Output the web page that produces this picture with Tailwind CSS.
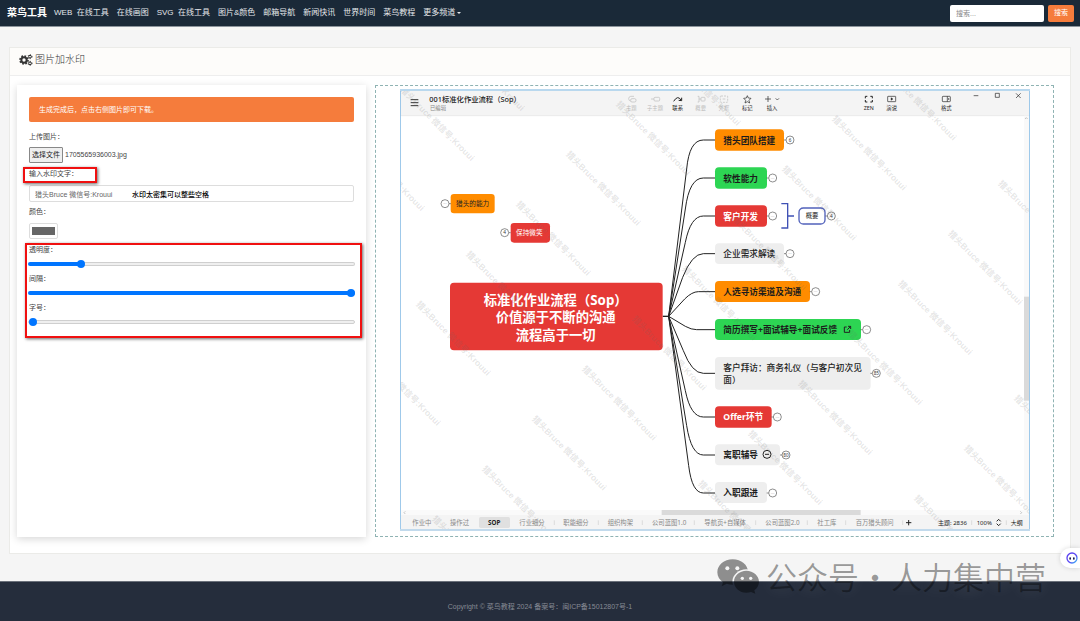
<!DOCTYPE html>
<html lang="zh-CN">
<head>
<meta charset="utf-8">
<meta name="viewport" content="width=device-width, initial-scale=1">
<title>图片加水印 - 菜鸟工具</title>
<script src="https://cdn.jsdelivr.net/npm/@tailwindcss/browser@4"></script>
</head>
<body class="flex min-h-screen flex-col bg-[#f5f5f5] font-['Liberation_Sans','Noto_Sans_CJK_SC',sans-serif] text-[7px] leading-[10px] text-[#444]">

<header class="flex h-[27px] items-center border-b border-[#8c949c] bg-[#1a2938] pr-[6px] pl-[7px] text-[8px] text-[#e4e7ea]">
  <a href="#" class="mr-[7px] text-[10px] font-bold whitespace-nowrap text-white">菜鸟工具</a>
  <nav class="flex flex-1 items-center gap-2 whitespace-nowrap">
    <a href="#">WEB&nbsp; 在线工具</a>
    <a href="#">在线画图</a>
    <a href="#">SVG&nbsp; 在线工具</a>
    <a href="#">图片&amp;颜色</a>
    <a href="#">邮箱导航</a>
    <a href="#">新闻快讯</a>
    <a href="#">世界时间</a>
    <a href="#">菜鸟教程</a>
    <a href="#" class="flex items-center gap-[2px]">更多频道<span class="border-x-2 border-t-2 border-x-transparent border-t-[#e4e7ea]"></span></a>
  </nav>
  <form class="flex gap-1 text-[7px]">
    <input type="search" aria-label="搜索" placeholder="搜索..." class="h-[17px] w-[94px] rounded-[2px] bg-white px-[6px] text-[#444] placeholder:text-[#888]">
    <button type="button" class="h-[17px] w-[26px] rounded-[2px] bg-[#f57c3c] text-white">搜索</button>
  </form>
</header>

<main class="mx-[9px] mt-5 mb-[27px] border border-[#ebebe8] bg-white">
  <h1 class="flex h-[28px] items-center gap-[2px] border-b border-[#eee] bg-[#fdfcfa] pb-1 pl-[9px] text-[10px] font-light text-[#333]">
    <svg class="size-[14px]" viewBox="0 0 42 42" fill="none" stroke="#333">
      <circle cx="15" cy="21" r="8" stroke-width="6"/>
      <circle cx="15" cy="21" r="12" stroke-width="5" stroke-dasharray="5 4.42"/>
      <circle cx="33" cy="11" r="4" stroke-width="3"/>
      <circle cx="33" cy="11" r="6" stroke-width="3" stroke-dasharray="3 3.28"/>
      <circle cx="33" cy="31" r="4" stroke-width="3"/>
      <circle cx="33" cy="31" r="6" stroke-width="3" stroke-dasharray="3 3.28"/>
    </svg>
    图片加水印
  </h1>

  <div class="grid grid-cols-[35fr_68fr] gap-[9px] pt-[9px] pr-4 pb-4 pl-[7px]">
    <form class="relative flex flex-col bg-white p-3 shadow-[0_2px_8px_rgba(0,0,0,0.16)]">
      <p class="flex h-[25px] items-center rounded-[2px] bg-[#f57c3c] px-[10px] text-white">生成完成后，点击右侧图片即可下载。</p>

      <label for="file" class="mt-[10px]">上传图片：</label>
      <div class="mt-[5px] flex h-4 items-center gap-px">
        <label for="file" class="flex h-4 items-center rounded-[1px] border border-[#888] bg-[#efefef] px-[2px] text-[#222]">选择文件</label>
        <input id="file" type="file" class="sr-only">
        <span class="pl-px">1705565936003.jpg</span>
      </div>

      <label for="mark" class="mt-[6px]">输入水印文字：</label>
      <input id="mark" type="text" value="猎头Bruce 微信号:Krouui" class="mt-[6px] h-[17px] rounded-[2px] border border-[#ddd] px-[5px] text-[#666]">

      <label for="color" class="mt-[5px]">颜色：</label>
      <input id="color" type="color" value="#666666" class="mt-[6px] h-4 w-[29px] rounded-[2px] border border-[#ddd] p-[2px] [&::-webkit-color-swatch]:rounded-none [&::-webkit-color-swatch]:border-0 [&::-webkit-color-swatch-wrapper]:px-0 [&::-webkit-color-swatch-wrapper]:py-[1px]">

      <label for="alpha" class="mt-[6px]">透明度：</label>
      <input id="alpha" type="range" min="0" max="100" value="15" class="-mx-px my-[7px] h-1 appearance-none rounded-full border border-transparent [&::-webkit-slider-thumb]:size-2 [&::-webkit-slider-thumb]:appearance-none [&::-webkit-slider-thumb]:rounded-full [&::-webkit-slider-thumb]:bg-[#0075ff]" style="background:linear-gradient(#0075ff,#0075ff) 0 0/16% 100% no-repeat border-box,linear-gradient(#efefef,#efefef) padding-box,linear-gradient(#cfcfcf,#cfcfcf) border-box">

      <label for="gap" class="mt-[1px]">间隔：</label>
      <input id="gap" type="range" min="0" max="100" value="100" class="-mx-px my-[7px] h-1 appearance-none rounded-full bg-[#0075ff] [&::-webkit-slider-thumb]:size-2 [&::-webkit-slider-thumb]:appearance-none [&::-webkit-slider-thumb]:rounded-full [&::-webkit-slider-thumb]:bg-[#0075ff]">

      <label for="size" class="mt-[1px]">字号：</label>
      <input id="size" type="range" min="0" max="100" value="0" class="-mx-px my-[7px] h-1 appearance-none rounded-full border border-[#cfcfcf] bg-[#efefef] [&::-webkit-slider-thumb]:size-2 [&::-webkit-slider-thumb]:appearance-none [&::-webkit-slider-thumb]:rounded-full [&::-webkit-slider-thumb]:bg-[#0075ff]">

      <span class="absolute top-[105px] left-[115px] font-medium text-black">水印太密集可以整些空格</span>
      <span class="absolute top-[82px] left-[6px] h-4 w-[74px] border-2 border-[#f01010] shadow-[1px_1px_3px_rgba(0,0,0,0.6)]"></span>
      <span class="absolute top-[158px] right-[4px] left-[8px] h-[95px] border-2 border-[#f01010] shadow-[1px_1px_3px_rgba(0,0,0,0.6)]"></span>
    </form>

    <div class="border border-dashed border-[#8fb3b3] px-4 pt-[3px] pb-[5px]">
      <svg id="map" class="mx-auto block h-auto w-full max-w-[630px]" viewBox="0 0 1890 1326" font-family="'Noto Sans','Noto Sans CJK SC',sans-serif">
        <rect width="1890" height="1326" fill="#fff"/>
        <rect width="1890" height="80" fill="#f4f4f4"/>
        <path d="M0 80H1890" stroke="#e4e4e4" stroke-width="2"/>

        <!-- toolbar -->
        <path d="M32 32H55M32 41H55M32 50H55" stroke="#333" stroke-width="3"/>
        <text x="88" y="40" font-size="22" font-weight="500" fill="#222">001标准化作业流程（Sop）</text>
        <text x="90" y="62" font-size="16" fill="#888">已编辑</text>
        <g fill="none" stroke="#bbb" stroke-width="2">
          <rect x="692" y="29" width="16" height="10" rx="4"/><path d="M692 37q-6-2-6-8t6-7h10"/>
          <rect x="762" y="25" width="17" height="11" rx="3"/><path d="M753 30H762"/>
          <path d="M893 22h4v17h-4M897 30h6"/><rect x="903" y="25" width="12" height="11" rx="2"/>
          <rect x="961" y="21" width="22" height="19" rx="2" stroke-dasharray="6 3"/><path d="M968 30h8"/>
        </g>
        <g fill="none" stroke="#222" stroke-width="3">
          <path d="M821 37Q833 17 843 33M836 34l9 1 0-9"/>
          <path d="M1042 20l3 7 8 1-6 6 2 8-7-4-7 4 2-8-6-6 8-1z" stroke-width="2"/>
          <path d="M1095 30h18M1104 21v18M1127 28l5 5 5-5" stroke-width="2"/>
          <path d="M1402 22h-6v6M1411 22h6v6M1402 39h-6v-6M1411 39h6v-6"/>
          <rect x="1463" y="22" width="24" height="16" rx="1" stroke-width="2"/><path d="M1473 26l6 4-6 4z" fill="#222" stroke-width="1"/>
          <rect x="1627" y="22" width="24" height="16" rx="2" stroke-width="2"/><path d="M1642 22v16M1646 27v6" stroke-width="2"/>
          <path d="M1721 20h14M1786 13h12v12h-12zM1848 13l14 14M1862 13l-14 14" stroke-width="2"/>
        </g>
        <g font-size="16" text-anchor="middle" fill="#bbb">
          <text x="694" y="63">主题</text><text x="765" y="63">子主题</text><text x="902" y="63">概要</text><text x="972" y="63">外框</text>
          <g fill="#222"><text x="833" y="63">联系</text><text x="1042" y="63">标记</text><text x="1116" y="63">插入</text><text x="1406" y="63">ZEN</text><text x="1475" y="63">演说</text><text x="1639" y="63">格式</text></g>
        </g>

        <!-- branches -->
        <g fill="none" stroke="#222" stroke-width="3">
          <path d="M788 682H806" stroke-width="4"/>
          <path d="M806 682L860 240Q868 153 910 153H945"/>
          <path d="M806 682L856 360Q868 267 910 267H945"/>
          <path d="M806 682L856 460Q872 381 910 381H945"/>
          <path d="M806 682L848 565Q876 494 910 494H945"/>
          <path d="M806 682L854 630Q876 608 895 608H945"/>
          <path d="M806 682L856 712Q874 722 890 722H945"/>
          <path d="M806 682L850 785Q876 853 910 853H945"/>
          <path d="M806 682L856 905Q872 984 910 984H945"/>
          <path d="M806 682L860 1010Q874 1098 910 1098H945"/>
          <path d="M806 682L866 1130Q876 1212 910 1212H945"/>
        </g>

        <!-- topics -->
        <rect x="150" y="581" width="638" height="203" rx="12" fill="#e53935"/>
        <g font-size="40" font-weight="700" fill="#fff" text-anchor="middle">
          <text x="467" y="647">标准化作业流程（Sop）</text><text x="467" y="700">价值源于不断的沟通</text><text x="467" y="753">流程高于一切</text>
        </g>
        <rect x="152" y="315" width="132" height="58" rx="10" fill="#ff8c00"/><text x="168" y="351" font-size="20" fill="#222">猎头的能力</text>
        <rect x="332" y="402" width="118" height="59" rx="10" fill="#e53935"/><text x="348" y="438" font-size="20" fill="#fff">保持微笑</text>
        <rect x="945" y="121" width="207" height="64" rx="12" fill="#ff8c00"/>
        <rect x="945" y="235" width="156" height="64" rx="12" fill="#2dd553"/>
        <rect x="945" y="349" width="156" height="64" rx="12" fill="#e53935"/>
        <rect x="945" y="463" width="207" height="62" rx="12" fill="#eee"/>
        <rect x="945" y="576" width="285" height="63" rx="12" fill="#ff8c00"/>
        <rect x="945" y="690" width="438" height="63" rx="12" fill="#2dd553"/>
        <rect x="945" y="804" width="467" height="98" rx="12" fill="#eee"/>
        <rect x="945" y="952" width="170" height="64" rx="12" fill="#e53935"/>
        <rect x="945" y="1066" width="195" height="63" rx="12" fill="#eee"/>
        <rect x="945" y="1179" width="156" height="63" rx="12" fill="#eee"/>
        <g font-size="26" font-weight="700" fill="#1c1c1c">
          <text x="970" y="164">猎头团队搭建</text>
          <text x="970" y="278">软性能力</text>
          <text x="970" y="392" fill="#fff">客户开发</text>
          <text x="970" y="505" font-weight="500">企业需求解读</text>
          <text x="970" y="619">人选寻访渠道及沟通</text>
          <text x="970" y="733">简历撰写+面试辅导+面试反馈</text>
          <text x="970" y="847" font-weight="500">客户拜访：商务礼仪（与客户初次见</text>
          <text x="970" y="882" font-weight="500">面）</text>
          <text x="970" y="994" fill="#fff">Offer环节</text>
          <text x="970" y="1108">离职辅导</text>
          <text x="970" y="1222">入职跟进</text>
        </g>
        <path d="M1340 714h-7v16h16v-7M1344 712h8v8M1352 712l-10 10" fill="none" stroke="#222" stroke-width="3"/>
        <circle cx="1101" cy="1096" r="12" fill="none" stroke="#222" stroke-width="3"/><path d="M1095 1096h12" stroke="#222" stroke-width="3"/>
        <path d="M1144 344H1163V417H1144M1163 381H1182" fill="none" stroke="#3f51b5" stroke-width="4"/>
        <rect x="1197" y="357" width="78" height="48" rx="13" fill="#fff" stroke="#5161bb" stroke-width="4"/>
        <text x="1236" y="388" font-size="19" text-anchor="middle" fill="#222">概要</text>
        <g id="toggles" fill="#fff" stroke="#555" stroke-width="2"></g>

        <!-- scroll bars -->
        <rect x="1872" y="80" width="15" height="1183" fill="#f9f9f9"/><rect x="1872" y="623" width="15" height="312" fill="#dadada"/>
        <rect x="3" y="1263" width="1884" height="15" fill="#fafafa"/><rect x="785" y="1263" width="597" height="15" fill="#dadada"/>
        <path d="M16 1267l-4 4 4 4M1861 1267l4 4-4 4M1875 90l4-4 4 4" fill="none" stroke="#aaa" stroke-width="2"/>

        <!-- sheet tabs -->
        <rect x="3" y="1278" width="1884" height="42" fill="#f4f4f4"/>
        <rect x="237" y="1284" width="93" height="33" rx="5" fill="#e0e0e0"/>
        <g font-size="19" fill="#888">
          <text x="37" y="1308">作业中</text><text x="150" y="1308">操作过</text><text x="283" y="1308" text-anchor="middle" font-weight="700" fill="#222">SOP</text>
          <text x="358" y="1308">行业细分</text><text x="490" y="1308">职能细分</text><text x="623" y="1308">组织构架</text><text x="756" y="1308">公司蓝图1.0</text>
          <text x="913" y="1308">导航页+自媒体</text><text x="1096" y="1308">公司蓝图2.0</text><text x="1252" y="1308">社工库</text><text x="1367" y="1308">百万猎头顾问</text>
          <g fill="#222" font-size="18"><text x="1614" y="1308">主题: 2836</text><text x="1730" y="1308">100%</text><text x="1832" y="1308">大纲</text></g>
        </g>
        <path d="M463 1294v14M595 1294v14M727 1294v14M883 1294v14M1067 1294v14M1222 1294v14M1337 1294v14M1508 1294v14M1715 1294v14M1819 1294v14" stroke="#d0d0d0" stroke-width="2"/>
        <path d="M1518 1301h16M1526 1293v16M1790 1297l6-6 6 6M1790 1304l6 6 6-6" fill="none" stroke="#222" stroke-width="3"/>

        <g id="marks" font-family="'Liberation Sans','Noto Sans CJK SC',sans-serif" font-size="26" font-weight="700" fill="#666" fill-opacity="0.17"></g>

        <path d="M1 0V1326M1889 0V1326" stroke="#8cbfe6" stroke-width="3"/>
        <path d="M0 3H1890" stroke="#b9d8ee" stroke-width="6"/>
        <path d="M0 1323H1890" stroke="#c2daec" stroke-width="6"/>
      </svg>
    </div>
  </div>
</main>

<footer class="relative flex-1 border-t border-[#6a707a] bg-[#252d3c] pt-5 pb-[9px] text-center text-[#858a94]">
  <p>Copyright © 菜鸟教程 2024 备案号：闽ICP备15012807号-1</p>
  <div class="absolute -top-6 right-[34px] flex items-center font-['Noto_Sans_CJK_SC',sans-serif] text-[31px] leading-[36px] font-[350] whitespace-nowrap text-black/40 [text-shadow:0_0_16px_rgba(255,255,255,0.14)]">
    <svg class="mr-[6px] h-9 w-11" viewBox="0 0 132 108">
      <defs>
        <mask id="big"><rect width="132" height="108" fill="#fff"/><circle cx="34" cy="31" r="6"/><circle cx="64" cy="31" r="6"/><ellipse cx="91" cy="71" rx="42" ry="37"/></mask>
        <mask id="small"><rect width="132" height="108" fill="#fff"/><circle cx="79" cy="61" r="5"/><circle cx="104" cy="61" r="5"/></mask>
      </defs>
      <path mask="url(#big)" d="M50 4C24 4 4 21 4 43c0 13 7 23 17 30l-4 12 15-8c6 2 12 3 18 3 26 0 46-17 46-38S76 4 50 4z" fill="#000" fill-opacity="0.42"/>
      <path mask="url(#small)" d="M91 38c-21 0-37 15-37 33s16 33 37 33c5 0 10-1 14-2l13 5-3-10c8-6 14-15 14-26 0-18-17-33-38-33z" fill="#000" fill-opacity="0.42"/>
    </svg>
    <span>公众号</span><span class="flex w-8 justify-center">·</span><span>人力集中营</span>
  </div>
</footer>

<button type="button" aria-label="助手" class="absolute top-[548px] right-0 flex h-5 w-5 items-center justify-end rounded-l-full bg-white pr-[2px] shadow-[0_0_5px_rgba(0,0,0,0.15)]">
  <svg class="size-3" viewBox="0 0 36 36">
    <defs><linearGradient id="ring" x1="0" y1="0" x2="1" y2="1"><stop offset="0" stop-color="#5a3df0"/><stop offset="0.6" stop-color="#5b4df5"/><stop offset="1" stop-color="#35c3f5"/></linearGradient></defs>
    <circle cx="18" cy="18" r="15" fill="#fff" stroke="url(#ring)" stroke-width="4"/>
    <rect x="10" y="16" width="5" height="7" rx="2" fill="#1d1d50"/><rect x="21" y="16" width="5" height="7" rx="2" fill="#1d1d50"/>
  </svg>
</button>

<script>
const NS = 'http://www.w3.org/2000/svg';
function add(parent, tag, attrs, text) {
  const el = document.createElementNS(NS, tag);
  for (const key in attrs) el.setAttribute(key, attrs[key]);
  if (text) el.textContent = text;
  parent.appendChild(el);
}

// Fold toggles: centre, label, side of the topic they hang from.
const toggles = document.getElementById('toggles');
[[1170,153,'6',-1],[1118,267,'···',-1],[1118,381,'···',-1],[1294,381,'4',-1],[1170,494,'···',-1],[1247,608,'···',-1],
 [1400,722,'···',-1],[1429,853,'85',-1],[1132,984,'···',-1],[1158,1098,'80',-1],[1118,1212,'···',-1],[135,344,'···',1],[314,431,'4',1]
].forEach(([x, y, label, side]) => {
  add(toggles, 'path', {d: `M${x + side * 18} ${y}H${x + side * 12}`});
  add(toggles, 'circle', {cx: x, cy: y, r: 12});
  add(toggles, 'text', {x: x, y: y + 5, 'font-size': 14, 'text-anchor': 'middle', fill: label === '···' ? '#999' : '#333', stroke: 'none'}, label);
});

// Diagonal watermark grid.
const marks = document.getElementById('marks');
for (let col = -3; col <= 4; col++) {
  for (let row = -8; row <= 16; row++) {
    const x = 503 - 150 * row + 648 * col, y = 191 + 150 * row + 44 * col;
    if (x < -215 || x > 1880 || y < -215 || y > 1310) continue;
    add(marks, 'text', {transform: `translate(${x} ${y}) rotate(45)`, 'dominant-baseline': 'central'}, '猎头Bruce 微信号:Krouui');
  }
}
</script>
</body>
</html>
